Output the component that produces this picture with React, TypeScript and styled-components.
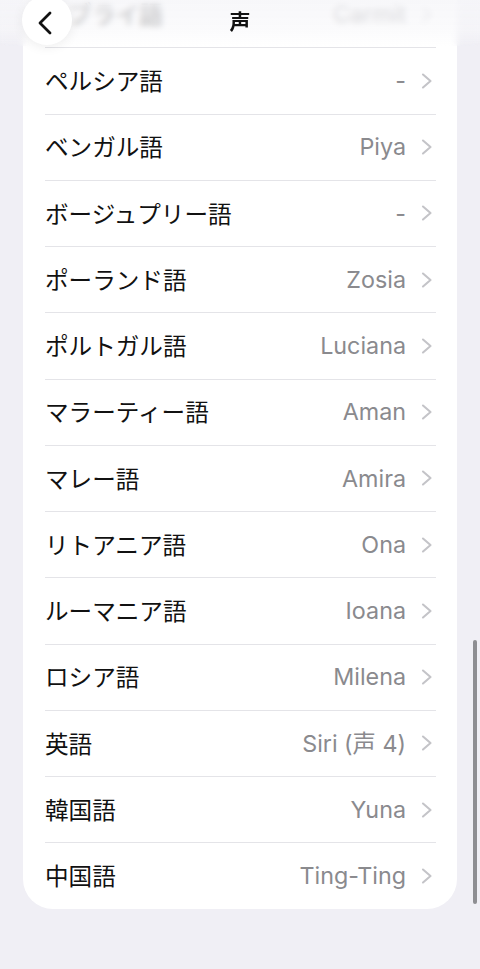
import React from 'react';
import styled, { createGlobalStyle } from 'styled-components';

const GlobalStyle = createGlobalStyle`
  html, body {
    margin: 0;
    padding: 0;
    background: #f0eff5;
  }
  body {
    width: 480px;
    height: 969px;
    overflow: hidden;
    font-family: Inter, "Noto Sans CJK JP", sans-serif;
  }
`;

interface Voice {
  lang: string;
  voice: string;
}

const voices: Voice[] = [
  { lang: 'ヘブライ語', voice: 'Carmit' },
  { lang: 'ペルシア語', voice: '-' },
  { lang: 'ベンガル語', voice: 'Piya' },
  { lang: 'ボージュプリー語', voice: '-' },
  { lang: 'ポーランド語', voice: 'Zosia' },
  { lang: 'ポルトガル語', voice: 'Luciana' },
  { lang: 'マラーティー語', voice: 'Aman' },
  { lang: 'マレー語', voice: 'Amira' },
  { lang: 'リトアニア語', voice: 'Ona' },
  { lang: 'ルーマニア語', voice: 'Ioana' },
  { lang: 'ロシア語', voice: 'Milena' },
  { lang: '英語', voice: 'Siri (声 4)' },
  { lang: '韓国語', voice: 'Yuna' },
  { lang: '中国語', voice: 'Ting-Ting' },
];

export default function App() {
  return (
    <Screen>
      <GlobalStyle />
      <Card>
        {voices.map((v, i) => (
          <Row key={v.lang} $first={i === 0}>
            <Label>{v.lang}</Label>
            <Value>{v.voice}</Value>
            <Chevron viewBox="0 0 12 16" aria-hidden>
              <path d="M2 1.5 L9.5 8 L2 14.5" />
            </Chevron>
          </Row>
        ))}
      </Card>

      <Header>
        <BackButton aria-label="戻る">
          <svg width="18" height="24" viewBox="0 0 18 24">
            <path
              d="M14 2 L4 12 L14 22"
              fill="none"
              stroke="#111"
              strokeWidth="2.8"
              strokeLinecap="round"
              strokeLinejoin="round"
            />
          </svg>
        </BackButton>
        <Title>声</Title>
      </Header>

      <ScrollBar />
    </Screen>
  );
}

const Screen = styled.div`
  position: relative;
  width: 480px;
  height: 969px;
  overflow: hidden;
  background: #f0eff5;
`;

const Card = styled.div`
  margin: -19px 23px 0 23px;
  background: #ffffff;
  border-radius: 0 0 30px 30px;
  display: flex;
  flex-direction: column;
`;

const Row = styled.div<{ $first?: boolean }>`
  height: 66.25px;
  box-sizing: border-box;
  margin: 0 21px 0 22px;
  display: flex;
  align-items: center;
  border-top: ${p => (p.$first ? 'none' : '1px solid #e4e4e8')};
`;

const Label = styled.span`
  flex: 1;
  font-family: "Noto Sans CJK JP", sans-serif;
  font-size: 23.6px;
  line-height: 1;
  color: #111111;
`;

const Value = styled.span`
  font-family: Inter, "Noto Sans CJK JP", sans-serif;
  font-size: 23.3px;
  line-height: 1;
  color: #8a8a8e;
  margin-right: 15px;
`;

const Chevron = styled.svg`
  width: 12px;
  height: 16px;
  flex: none;
  fill: none;
  stroke: #c4c4c8;
  stroke-width: 2.1;
  stroke-linecap: round;
  stroke-linejoin: round;
  margin-right: 3px;
`;

const Header = styled.div`
  position: absolute;
  top: 0;
  left: 0;
  right: 0;
  height: 46px;
  display: flex;
  align-items: center;
  justify-content: center;
  background: linear-gradient(
    to bottom,
    rgba(246, 246, 249, 0.85) 0%,
    rgba(248, 248, 250, 0.6) 65%,
    rgba(255, 255, 255, 0) 100%
  );
  backdrop-filter: blur(3px);
`;

const BackButton = styled.button`
  position: absolute;
  left: 22px;
  top: -5px;
  width: 50px;
  height: 50px;
  border-radius: 50%;
  border: none;
  background: #ffffff;
  box-shadow: 0 2px 12px rgba(0, 0, 0, 0.07);
  display: flex;
  align-items: center;
  justify-content: center;
  padding: 6px 5px 0 0;
`;

const Title = styled.h1`
  margin: -6px 0 0 0;
  font-family: "Noto Sans CJK JP", sans-serif;
  font-size: 21px;
  font-weight: 700;
  color: #111111;
`;

const ScrollBar = styled.div`
  position: absolute;
  right: 3px;
  top: 640px;
  width: 4px;
  height: 264px;
  border-radius: 2px;
  background: #8e8e92;
`;
